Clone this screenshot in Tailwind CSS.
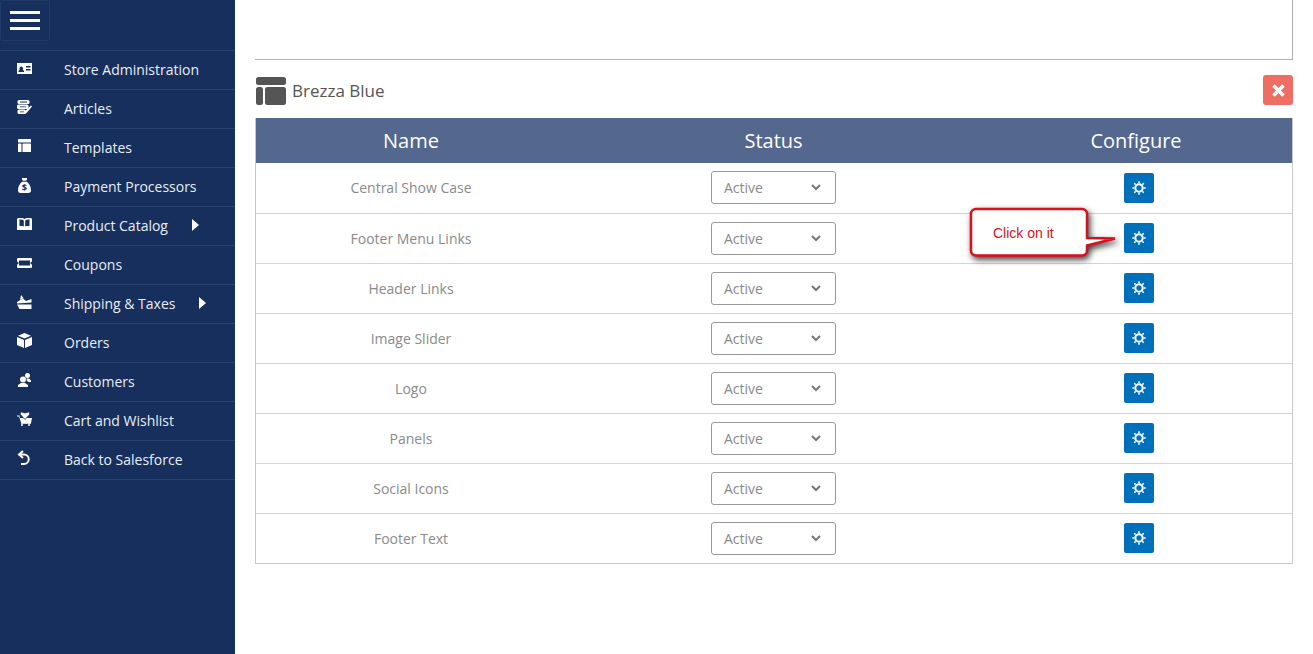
<!DOCTYPE html>
<html lang="en">
<head>
    <meta charset="UTF-8">
    <title>Brezza Blue</title>
    <script src="https://cdn.jsdelivr.net/npm/@tailwindcss/browser@4"></script>
</head>
<body class="bg-white h-[654px] overflow-hidden font-['Open_Sans',sans-serif]">
<div class="flex h-[654px] relative">
    <!-- Sidebar -->
    <aside class="w-[235px] shrink-0 bg-[#172f5c] text-[#e8edf5] text-[14px]">
        <div class="h-[51px] border-b border-[#2a4270]">
            <button class="w-[50px] h-[41px] border border-[#22396a] rounded-[2px] flex flex-col items-center justify-center gap-[5px]">
                <span class="block w-[30px] h-[3px] bg-white"></span>
                <span class="block w-[30px] h-[3px] bg-white"></span>
                <span class="block w-[30px] h-[3px] bg-white"></span>
            </button>
        </div>
        <nav>
            <a class="h-[39px] pb-[2px] border-b border-[#2a4270] flex items-center">
                <span class="w-[64px] pl-[17px] shrink-0"><svg class="w-[15px] h-[11px] mb-[2px]" viewBox="0 0 15 11" fill="#fff"><path fill-rule="evenodd" d="M0 0h15v11H0zM1.500 9h5.500V7.800L5.700 6.800a1.900 1.900 0 1 0-2.900 0L1.500 7.800zM9 3v1.500h4.500V3zM9 6v1.500h4.500V6z"/></svg></span>
                <span>Store Administration</span>
            </a>
            <a class="h-[39px] pb-[2px] border-b border-[#2a4270] flex items-center">
                <span class="w-[64px] pl-[17px] shrink-0"><svg class="w-[15px] h-[14px] mb-[3px]" viewBox="0 0 15 14" fill="#fff"><rect x="0.500" width="12" height="4" rx="1.500"/><rect y="4.500" width="11.500" height="4.500" rx="1.500"/><rect x="0.500" y="9.500" width="8.500" height="4.500" rx="1.500"/><path d="M14 5.500l1 1-5.500 6.500-2.500 1 .5-2.500z"/><path d="M3 1.600h7v.8H3zM3 6.400h6v.8H3zM3 11.400h4v.8H3z" fill="#172f5c"/></svg></span>
                <span>Articles</span>
            </a>
            <a class="h-[39px] pb-[2px] border-b border-[#2a4270] flex items-center">
                <span class="w-[64px] pl-[18px] shrink-0"><svg class="w-[13px] h-[13px] mb-[3px]" viewBox="0 0 13 13" fill="#fff"><rect width="13" height="3.500" rx=".6"/><rect y="4.500" width="3.500" height="8.500" rx=".6"/><rect x="4.500" y="4.500" width="8.500" height="8.500" rx=".6"/></svg></span>
                <span>Templates</span>
            </a>
            <a class="h-[39px] pb-[2px] border-b border-[#2a4270] flex items-center">
                <span class="w-[64px] pl-[18px] shrink-0"><svg class="w-[13px] h-[15px] mb-[2px]" viewBox="0 0 14 16" fill="#fff"><path d="M4 0h6L9 3H5zM4.500 4h5C12 6 14 9 14 13a3 3 0 0 1-3 3H3a3 3 0 0 1-3-3C0 9 2 6 4.500 4z"/><text x="7" y="13.500" text-anchor="middle" font-size="10" font-weight="700" fill="#172f5c" font-family="Open Sans">$</text></svg></span>
                <span>Payment Processors</span>
            </a>
            <a class="h-[39px] pb-[2px] border-b border-[#2a4270] flex items-center">
                <span class="w-[64px] pl-[17px] shrink-0"><svg class="w-[15px] h-[12px] mb-[3px]" viewBox="0 0 15 12" fill="#fff"><path fill-rule="evenodd" d="M1 0h3c1.500 0 3 .5 3.500 1C8 .5 9.500 0 11 0h3l1 1v9H9l-1 1H7L6 10H0V1zM2.500 1.500V8h3l1.300.5V2.500C6 2 5 1.500 4 1.500zM12.500 1.500H11c-1 0-2 .5-2.800 1v6L9.500 8h3z"/><path d="M0 10h15v2H0z"/></svg></span>
                <span>Product Catalog</span>
                <svg class="ml-[24px] w-[7px] h-[12px]" viewBox="0 0 7 12" fill="#fff"><path d="M0 0l7 6-7 6z"/></svg>
            </a>
            <a class="h-[39px] pb-[2px] border-b border-[#2a4270] flex items-center">
                <span class="w-[64px] pl-[17px] shrink-0"><svg class="w-[15px] h-[10px] mb-[3px]" viewBox="0 0 15 10" fill="#fff"><path fill-rule="evenodd" d="M1 0h13a1 1 0 0 1 1 1v2.500a1.500 1.500 0 0 0 0 3V9a1 1 0 0 1-1 1H1a1 1 0 0 1-1-1V6.500a1.500 1.500 0 0 0 0-3V1a1 1 0 0 1 1-1zM2 2.500v5h11v-5z"/></svg></span>
                <span>Coupons</span>
            </a>
            <a class="h-[39px] pb-[2px] border-b border-[#2a4270] flex items-center">
                <span class="w-[64px] pl-[17px] shrink-0"><svg class="w-[15px] h-[14px] mb-[3px]" viewBox="0 0 15 14" fill="#fff"><path d="M4 0l2.500 3L3 5zM0 7l6-3.500 3 2.500 5.500-2v3.500L0 8.500zM0 9.500h14.500V14H2.500z"/></svg></span>
                <span>Shipping &amp; Taxes</span>
                <svg class="ml-[24px] w-[7px] h-[12px]" viewBox="0 0 7 12" fill="#fff"><path d="M0 0l7 6-7 6z"/></svg>
            </a>
            <a class="h-[39px] pb-[2px] border-b border-[#2a4270] flex items-center">
                <span class="w-[64px] pl-[17px] shrink-0"><svg class="w-[15px] h-[15px] mb-[3px]" viewBox="0 0 15 15" fill="#fff"><path d="M7.500 0L14 2.700 7.500 5.500 1 2.700zM0 4l7 3v8L0 12zM15 4L8 7v8l7-3z"/></svg></span>
                <span>Orders</span>
            </a>
            <a class="h-[39px] pb-[2px] border-b border-[#2a4270] flex items-center">
                <span class="w-[64px] pl-[18px] shrink-0"><svg class="w-[13px] h-[14px] mb-[3px]" viewBox="0 0 13 14" fill="#fff"><circle cx="5" cy="6.500" r="3"/><path d="M0 14v-2l3-2h4l3 2v2z"/><circle cx="9.500" cy="2.500" r="2.500"/><path d="M8.500 5.500h2.500L13 7.500V9H10.500L9 8z"/></svg></span>
                <span>Customers</span>
            </a>
            <a class="h-[39px] pb-[2px] border-b border-[#2a4270] flex items-center">
                <span class="w-[64px] pl-[17px] shrink-0"><svg class="w-[15px] h-[14px] mb-[2px]" viewBox="0 0 15 14" fill="#fff"><path d="M0 3.500h2.500L3 6h12l-1 5H4.200L2 4.500H0z"/><path d="M4 11.200h10v.8H4z"/><circle cx="5" cy="13" r="1"/><circle cx="12" cy="13" r="1"/><path d="M8 7.500L3.800 3a1.800 1.800 0 0 1 .7-3L8 1l3.500-1a1.800 1.800 0 0 1 .7 3z" stroke="#172f5c" stroke-width=".8"/></svg></span>
                <span>Cart and Wishlist</span>
            </a>
            <a class="h-[39px] pb-[2px] border-b border-[#2a4270] flex items-center">
                <span class="w-[64px] pl-[17px] shrink-0"><svg class="w-[13px] h-[16px] mb-[2px]" viewBox="0 0 13 16" fill="none" stroke="#fff" stroke-width="2"><path d="M6 1L2 4.500 6 8"/><path d="M2 4.500h5a4.700 4.700 0 0 1 0 9.500H4"/></svg></span>
                <span>Back to Salesforce</span>
            </a>
        </nav>
    </aside>

    <!-- Main -->
    <main class="flex-1 pl-[20px] pr-[20px] text-[#8a8a8a]">
        <div class="h-[60px] border-b border-r border-[#b0b0b0]"></div>
        <div class="h-[58px] flex items-center justify-between">
            <div class="flex items-center gap-[5px] pl-[1px] mt-[4px]">
                <svg class="w-[31px] h-[28px]" viewBox="0 0 31 28" fill="#555"><rect width="30" height="8" rx="2.500"/><rect y="10" width="7" height="18" rx="2.500"/><rect x="9" y="10" width="21" height="18" rx="2.500"/></svg>
                <span class="text-[17px] text-[#555]">Brezza Blue</span>
            </div>
            <button class="w-[30px] h-[30px] mt-[2px] rounded-[3px] bg-[#ee6e63] flex items-center justify-center">
                <svg class="w-[13px] h-[13px]" viewBox="0 0 13 13" stroke="#fff" stroke-width="3.500"><path d="M1.500 1.500l10 10M11.500 1.500l-10 10"/></svg>
            </button>
        </div>
        <div class="border-l border-r border-[#c8c8c8]">
            <div class="grid grid-cols-[310px_414px_312px] h-[45px] bg-[#53678f] text-white text-[20px] text-center items-center">
                <div>Name</div><div class="pl-[1px]">Status</div><div>Configure</div>
            </div>
            <div class="text-[14px]">
                <div class="grid grid-cols-[310px_414px_312px] h-[51px] pb-[1px] border-b border-[#d4d4d4] items-center text-center"><div>Central Show Case</div><div class="flex justify-center"><div class="w-[125px] h-[33px] border border-[#999] rounded-[3px] flex items-center justify-between pl-[12.500px] pr-[14px]"><span>Active</span><svg class="w-[10px] h-[7px]" viewBox="0 0 10 7" fill="none" stroke="#777" stroke-width="2"><path d="M1 1l4 4 4-4"/></svg></div></div><div class="flex justify-center pl-[6px]"><button class="w-[30px] h-[30px] rounded-[2px] bg-[#0070ba] flex items-center justify-center"><svg class="w-[14px] h-[14px]" viewBox="0 0 14 14"><circle cx="7" cy="7" r="3.700" fill="none" stroke="#fff" stroke-width="2.100"/><path d="M7 .3v2M7 11.700v2M.3 7h2M11.700 7h2M2.300 2.300l1.300 1.300M10.400 10.400l1.300 1.300M11.700 2.300l-1.300 1.300M3.600 10.400l-1.300 1.300" stroke="#fff" stroke-width="1.500"/></svg></button></div></div>
                <div class="grid grid-cols-[310px_414px_312px] h-[50px] border-b border-[#d4d4d4] items-center text-center"><div>Footer Menu Links</div><div class="flex justify-center"><div class="w-[125px] h-[33px] border border-[#999] rounded-[3px] flex items-center justify-between pl-[12.500px] pr-[14px]"><span>Active</span><svg class="w-[10px] h-[7px]" viewBox="0 0 10 7" fill="none" stroke="#777" stroke-width="2"><path d="M1 1l4 4 4-4"/></svg></div></div><div class="flex justify-center pl-[6px]"><button class="w-[30px] h-[30px] mb-[1px] rounded-[2px] bg-[#0070ba] flex items-center justify-center"><svg class="w-[14px] h-[14px]" viewBox="0 0 14 14"><circle cx="7" cy="7" r="3.700" fill="none" stroke="#fff" stroke-width="2.100"/><path d="M7 .3v2M7 11.700v2M.3 7h2M11.700 7h2M2.300 2.300l1.300 1.300M10.400 10.400l1.300 1.300M11.700 2.300l-1.300 1.300M3.600 10.400l-1.300 1.300" stroke="#fff" stroke-width="1.500"/></svg></button></div></div>
                <div class="grid grid-cols-[310px_414px_312px] h-[50px] border-b border-[#d4d4d4] items-center text-center"><div>Header Links</div><div class="flex justify-center"><div class="w-[125px] h-[33px] border border-[#999] rounded-[3px] flex items-center justify-between pl-[12.500px] pr-[14px]"><span>Active</span><svg class="w-[10px] h-[7px]" viewBox="0 0 10 7" fill="none" stroke="#777" stroke-width="2"><path d="M1 1l4 4 4-4"/></svg></div></div><div class="flex justify-center pl-[6px]"><button class="w-[30px] h-[30px] mb-[1px] rounded-[2px] bg-[#0070ba] flex items-center justify-center"><svg class="w-[14px] h-[14px]" viewBox="0 0 14 14"><circle cx="7" cy="7" r="3.700" fill="none" stroke="#fff" stroke-width="2.100"/><path d="M7 .3v2M7 11.700v2M.3 7h2M11.700 7h2M2.300 2.300l1.300 1.300M10.400 10.400l1.300 1.300M11.700 2.300l-1.300 1.300M3.600 10.400l-1.300 1.300" stroke="#fff" stroke-width="1.500"/></svg></button></div></div>
                <div class="grid grid-cols-[310px_414px_312px] h-[50px] border-b border-[#d4d4d4] items-center text-center"><div>Image Slider</div><div class="flex justify-center"><div class="w-[125px] h-[33px] border border-[#999] rounded-[3px] flex items-center justify-between pl-[12.500px] pr-[14px]"><span>Active</span><svg class="w-[10px] h-[7px]" viewBox="0 0 10 7" fill="none" stroke="#777" stroke-width="2"><path d="M1 1l4 4 4-4"/></svg></div></div><div class="flex justify-center pl-[6px]"><button class="w-[30px] h-[30px] mb-[1px] rounded-[2px] bg-[#0070ba] flex items-center justify-center"><svg class="w-[14px] h-[14px]" viewBox="0 0 14 14"><circle cx="7" cy="7" r="3.700" fill="none" stroke="#fff" stroke-width="2.100"/><path d="M7 .3v2M7 11.700v2M.3 7h2M11.700 7h2M2.300 2.300l1.300 1.300M10.400 10.400l1.300 1.300M11.700 2.300l-1.300 1.300M3.600 10.400l-1.300 1.300" stroke="#fff" stroke-width="1.500"/></svg></button></div></div>
                <div class="grid grid-cols-[310px_414px_312px] h-[50px] border-b border-[#d4d4d4] items-center text-center"><div>Logo</div><div class="flex justify-center"><div class="w-[125px] h-[33px] border border-[#999] rounded-[3px] flex items-center justify-between pl-[12.500px] pr-[14px]"><span>Active</span><svg class="w-[10px] h-[7px]" viewBox="0 0 10 7" fill="none" stroke="#777" stroke-width="2"><path d="M1 1l4 4 4-4"/></svg></div></div><div class="flex justify-center pl-[6px]"><button class="w-[30px] h-[30px] mb-[1px] rounded-[2px] bg-[#0070ba] flex items-center justify-center"><svg class="w-[14px] h-[14px]" viewBox="0 0 14 14"><circle cx="7" cy="7" r="3.700" fill="none" stroke="#fff" stroke-width="2.100"/><path d="M7 .3v2M7 11.700v2M.3 7h2M11.700 7h2M2.300 2.300l1.300 1.300M10.400 10.400l1.300 1.300M11.700 2.300l-1.300 1.300M3.600 10.400l-1.300 1.300" stroke="#fff" stroke-width="1.500"/></svg></button></div></div>
                <div class="grid grid-cols-[310px_414px_312px] h-[50px] border-b border-[#d4d4d4] items-center text-center"><div>Panels</div><div class="flex justify-center"><div class="w-[125px] h-[33px] border border-[#999] rounded-[3px] flex items-center justify-between pl-[12.500px] pr-[14px]"><span>Active</span><svg class="w-[10px] h-[7px]" viewBox="0 0 10 7" fill="none" stroke="#777" stroke-width="2"><path d="M1 1l4 4 4-4"/></svg></div></div><div class="flex justify-center pl-[6px]"><button class="w-[30px] h-[30px] mb-[1px] rounded-[2px] bg-[#0070ba] flex items-center justify-center"><svg class="w-[14px] h-[14px]" viewBox="0 0 14 14"><circle cx="7" cy="7" r="3.700" fill="none" stroke="#fff" stroke-width="2.100"/><path d="M7 .3v2M7 11.700v2M.3 7h2M11.700 7h2M2.300 2.300l1.300 1.300M10.400 10.400l1.300 1.300M11.700 2.300l-1.300 1.300M3.600 10.400l-1.300 1.300" stroke="#fff" stroke-width="1.500"/></svg></button></div></div>
                <div class="grid grid-cols-[310px_414px_312px] h-[50px] border-b border-[#d4d4d4] items-center text-center"><div>Social Icons</div><div class="flex justify-center"><div class="w-[125px] h-[33px] border border-[#999] rounded-[3px] flex items-center justify-between pl-[12.500px] pr-[14px]"><span>Active</span><svg class="w-[10px] h-[7px]" viewBox="0 0 10 7" fill="none" stroke="#777" stroke-width="2"><path d="M1 1l4 4 4-4"/></svg></div></div><div class="flex justify-center pl-[6px]"><button class="w-[30px] h-[30px] mb-[1px] rounded-[2px] bg-[#0070ba] flex items-center justify-center"><svg class="w-[14px] h-[14px]" viewBox="0 0 14 14"><circle cx="7" cy="7" r="3.700" fill="none" stroke="#fff" stroke-width="2.100"/><path d="M7 .3v2M7 11.700v2M.3 7h2M11.700 7h2M2.300 2.300l1.300 1.300M10.400 10.400l1.300 1.300M11.700 2.300l-1.300 1.300M3.600 10.400l-1.300 1.300" stroke="#fff" stroke-width="1.500"/></svg></button></div></div>
                <div class="grid grid-cols-[310px_414px_312px] h-[50px] border-b border-[#c8c8c8] items-center text-center"><div>Footer Text</div><div class="flex justify-center"><div class="w-[125px] h-[33px] border border-[#999] rounded-[3px] flex items-center justify-between pl-[12.500px] pr-[14px]"><span>Active</span><svg class="w-[10px] h-[7px]" viewBox="0 0 10 7" fill="none" stroke="#777" stroke-width="2"><path d="M1 1l4 4 4-4"/></svg></div></div><div class="flex justify-center pl-[6px]"><button class="w-[30px] h-[30px] mb-[1px] rounded-[2px] bg-[#0070ba] flex items-center justify-center"><svg class="w-[14px] h-[14px]" viewBox="0 0 14 14"><circle cx="7" cy="7" r="3.700" fill="none" stroke="#fff" stroke-width="2.100"/><path d="M7 .3v2M7 11.700v2M.3 7h2M11.700 7h2M2.300 2.300l1.300 1.300M10.400 10.400l1.300 1.300M11.700 2.300l-1.300 1.300M3.600 10.400l-1.300 1.300" stroke="#fff" stroke-width="1.500"/></svg></button></div></div>
            </div>
        </div>
    </main>

    <!-- Callout annotation -->
    <div class="absolute left-[965px] top-[203px] w-[155px] h-[63px]">
        <svg class="absolute inset-0 w-full h-full drop-shadow-[2px_3px_3px_rgba(0,0,0,0.75)]" viewBox="0 0 155 63"><path d="M11 6h106a5 5 0 0 1 5 5v24l28 .5-28 7v5a5 5 0 0 1-5 5H11a5 5 0 0 1-5-5V11a5 5 0 0 1 5-5z" fill="#fff" stroke="#d8101c" stroke-width="2.500"/></svg>
        <span class="absolute left-[28px] top-[21px] text-[14px] leading-[18px] text-[#d8101c] font-['Liberation_Sans',sans-serif]">Click on it</span>
    </div>
</div>
</body>
</html>
